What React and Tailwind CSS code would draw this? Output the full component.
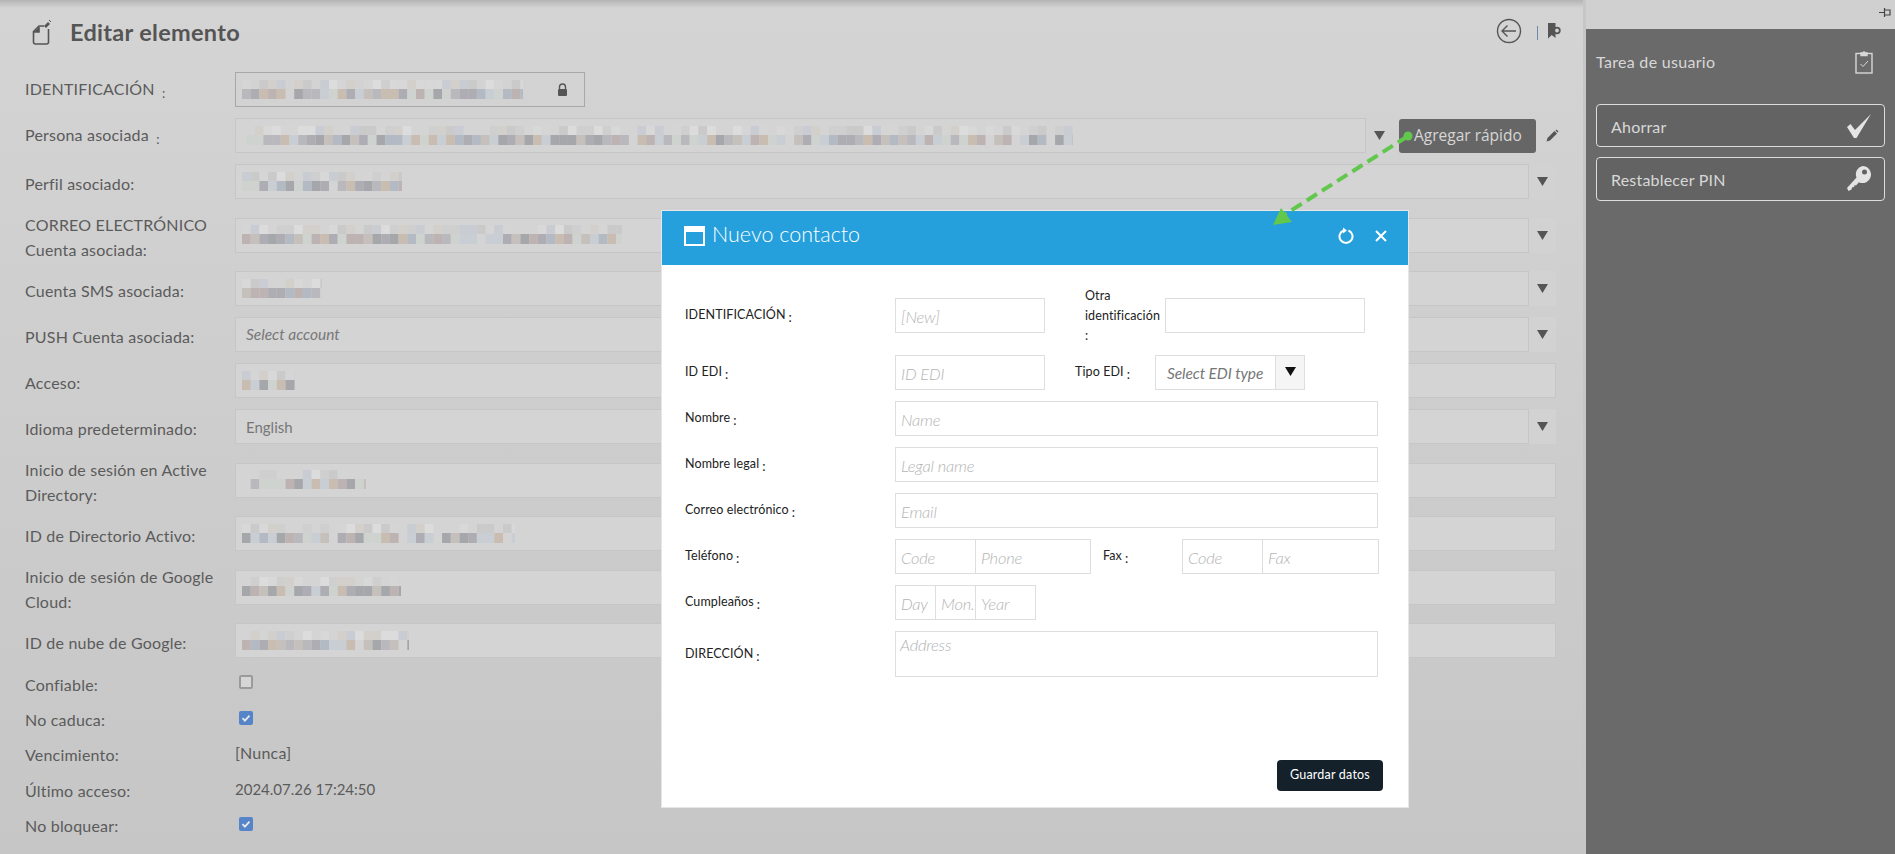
import React from 'react'

const topColors = ['#d8d8d8', '#cfcfcf', '#cacaca', '#d3cfcb', '#c9ccd2', '#dcdcdc', '#d5d5d5']
const lowColors = ['#b8b8bd', '#c5c0bb', '#adadb3', '#c8ced3', '#bdb3b3', '#a5a7ab', '#cfd3d0', '#c8bdb0', '#b3bac4']

// pixelated (redacted) text
function Pixels({ width, seed, height = 20 }) {
  const step = 8.7
  const count = Math.ceil(width / step)
  const rects = []
  let s = seed
  const next = () => {
    s = (s * 9301 + 49297) % 233280
    return s / 233280
  }
  for (let i = 0; i < count; i++) {
    const a = next()
    const b = next()
    if (a > 0.25) rects.push(<rect key={`t${i}`} x={i * step} y={0} width={step} height={9} fill={topColors[Math.floor(b * topColors.length)]} />)
    const c = next()
    const d = next()
    if (c > 0.06) rects.push(<rect key={`l${i}`} x={i * step} y={9} width={step} height={10} fill={lowColors[Math.floor(d * lowColors.length)]} />)
  }
  return (
    <svg width={width} height={height} className="block shrink-0">
      {rects}
    </svg>
  )
}

function Caret({ dark }) {
  return (
    <svg width="11" height="9" viewBox="0 0 11 9" className="block">
      <path d="M0 0h11L5.5 9z" fill={dark ? '#111' : '#555'} />
    </svg>
  )
}

function Colon() {
  return <span className="ml-[3px] align-[-3px] text-[13px]">:</span>
}

function Field({ children, dropdown, className = 'flex-1' }) {
  return (
    <div className={`flex ${className}`}>
      <div className="flex h-[35px] flex-1 items-center border border-[#c6c6c6] bg-[#d4d4d4] pl-[6px] text-[#777]">
        {children}
      </div>
      {dropdown && (
        <div className="flex h-[35px] w-[27px] items-center justify-center bg-[#d2d2d2]">
          <Caret />
        </div>
      )}
    </div>
  )
}

function Row({ label, tall, children }) {
  return (
    <div className={`flex items-center ${tall ? 'h-[61px]' : 'h-[46px]'}`}>
      <div className="w-[235px] shrink-0 pl-[25px] pr-[5px] pt-[3px] leading-[25px]">{label}</div>
      {children}
    </div>
  )
}

function CheckRow({ label, checked }) {
  return (
    <div className="flex h-[35.25px] items-center">
      <div className="w-[239px] pl-[25px]">{label}</div>
      {checked ? (
        <div className="-mt-[4px] flex size-[14px] items-center justify-center rounded-[2px] bg-[#5584c9]">
          <svg width="10" height="10" viewBox="0 0 10 10" fill="none" stroke="#e8e8e8" strokeWidth="1.8">
            <path d="M1.5 5.2l2.4 2.4 4.6-5" />
          </svg>
        </div>
      ) : (
        <div className="-mt-[6px] size-[14px] rounded-[2px] border-2 border-[#9b9b9b] bg-[#d6d6d6]" />
      )}
    </div>
  )
}

function Box({ text, className = '' }) {
  return (
    <div className={`flex h-[35px] shrink-0 items-center overflow-hidden whitespace-nowrap border border-[#dedede] bg-white pl-[5px] pt-[3px] text-[16.5px] font-light italic tracking-[-0.2px] text-[#b4b4b4] ${className}`}>
      {text}
    </div>
  )
}

function ModalRow({ label, children, className = 'mt-[11px]' }) {
  return (
    <div className={`flex h-[35px] items-center ${className}`}>
      <div className="w-[210px] shrink-0 pt-[3px] text-[12.5px] tracking-[0.1px] text-[#222]">
        {label}
        <Colon />
      </div>
      {children}
    </div>
  )
}

export default function App() {
  return (
    <div className="relative flex h-screen w-full overflow-hidden font-['Lato',sans-serif] text-[16px] tracking-[0.2px] text-[#5b5b5b]">
      <div className="flex h-full w-[1586px] shrink-0 flex-col border-r-[3px] border-[#c6c6c6] bg-[linear-gradient(#d4d4d4,#c6c6c6)]">
        <div className="h-[8px] bg-[linear-gradient(#b4b4b4,#d3d3d300)]" />
        <div className="flex h-[58.5px] shrink-0 items-start pt-[10px]">
          <svg width="20" height="26" viewBox="0 0 20 26" fill="none" stroke="#555" strokeWidth="1.6" className="ml-[32px] mt-[1px]">
            <path d="M12 7H7L1.5 12.500V23a2 2 0 0 0 2 2h11a2 2 0 0 0 2-2V10" />
            <path d="M7 8v5H2" fill="#555" />
            <path d="M12 7l4-4 2 2-4 4z" fill="#555" stroke="none" />
            <path d="M17 1l2 2" strokeWidth="1" />
          </svg>
          <h1 className="ml-[18px] text-[23.5px] font-bold leading-[28px] tracking-[0.3px] text-[#555]">Editar elemento</h1>
          <div className="ml-auto flex items-center pr-[22px]">
            <svg width="26" height="26" viewBox="0 0 26 26" fill="none" stroke="#555" strokeWidth="1.4">
              <circle cx="13" cy="13" r="11.5" />
              <path d="M20 13H6M11.5 7.5L6 13l5.5 5.5" />
            </svg>
            <div className="ml-[15.5px] mt-[4px] h-[14px] w-px bg-[#6d8ba8]" />
            <svg width="14" height="18" viewBox="0 0 14 18" className="ml-[9px]">
              <path d="M1 1h7.500v15L4.750 13 1 16.500z" fill="#555" />
              <circle cx="10" cy="8.500" r="2.800" fill="#d2d2d2" stroke="#555" strokeWidth="1.800" />
            </svg>
          </div>
        </div>

        <Row label={<>IDENTIFICACIÓN <Colon /></>}>
          <div className="flex h-[35px] w-[350px] items-center border border-[#a8a8a8] pl-[6px]">
            <Pixels width={281} seed={11} />
            <svg width="11" height="13" viewBox="0 0 11 13" className="ml-[34px]">
              <path d="M2.500 6V4a3 3 0 0 1 6 0v2" fill="none" stroke="#555" strokeWidth="1.4" />
              <rect x="1" y="6" width="9" height="7" rx="1" fill="#555" />
            </svg>
          </div>
        </Row>
        <Row label={<>Persona asociada <Colon /></>}>
          <Field dropdown className="w-[1158px] shrink-0">
            <div className="pl-[4px]"><Pixels width={827} seed={23} /></div>
          </Field>
          <button className="ml-[6px] mr-[10px] flex h-[34px] w-[137px] shrink-0 items-center rounded-[3px] bg-[#666] pl-[15px] font-['Open_Sans',sans-serif] text-[15.5px] tracking-normal text-[#d6d6d6]">
            Agregar rápido
          </button>
          <svg width="13" height="13" viewBox="0 0 13 13">
            <path d="M0.500 12.500l1-3.500 7-7 2.500 2.500-7 7z" fill="#555" />
            <path d="M10 1l2 2" stroke="#555" strokeWidth="1.4" />
          </svg>
        </Row>
        <Row label="Perfil asociado:">
          <div className="mr-[27px] flex-1"><Field dropdown><Pixels width={160} seed={37} /></Field></div>
        </Row>
        <Row tall label={<>CORREO ELECTRÓNICO<br />Cuenta asociada:</>}>
          <div className="mr-[27px] flex-1"><Field dropdown><Pixels width={380} seed={41} /></Field></div>
        </Row>
        <Row label="Cuenta SMS asociada:">
          <div className="mr-[27px] flex-1"><Field dropdown><Pixels width={80} seed={53} /></Field></div>
        </Row>
        <Row label="PUSH Cuenta asociada:">
          <div className="mr-[27px] flex-1">
            <Field dropdown><span className="pl-[4px] text-[15.5px] italic tracking-normal">Select account</span></Field>
          </div>
        </Row>
        <Row label="Acceso:">
          <div className="mr-[27px] flex-1"><Field><Pixels width={53} seed={61} /></Field></div>
        </Row>
        <Row label="Idioma predeterminado:">
          <div className="mr-[27px] flex-1">
            <Field dropdown><span className="pl-[4px] pt-[2px] text-[15px] tracking-normal">English</span></Field>
          </div>
        </Row>
        <Row tall label="Inicio de sesión en Active Directory:">
          <div className="mr-[27px] flex-1"><Field><Pixels width={124} seed={71} /></Field></div>
        </Row>
        <Row label="ID de Directorio Activo:">
          <div className="mr-[27px] flex-1"><Field><Pixels width={273} seed={83} /></Field></div>
        </Row>
        <Row tall label="Inicio de sesión de Google Cloud:">
          <div className="mr-[27px] flex-1"><Field><Pixels width={159} seed={97} /></Field></div>
        </Row>
        <Row label="ID de nube de Google:">
          <div className="mr-[27px] flex-1"><Field><Pixels width={167} seed={101} /></Field></div>
        </Row>

        <div className="mt-[3.750px]">
          <CheckRow label="Confiable:" />
          <CheckRow label="No caduca:" checked />
          <div className="flex h-[35.25px] items-center">
            <div className="w-[235px] pl-[25px]">Vencimiento:</div>
            <span className="-mt-[4px]">[Nunca]</span>
          </div>
          <div className="flex h-[35.25px] items-center">
            <div className="w-[235px] pl-[25px]">Último acceso:</div>
            <span className="-mt-[3px] text-[15px] tracking-normal">2024.07.26 17:24:50</span>
          </div>
          <CheckRow label="No bloquear:" checked />
        </div>
      </div>

      <div className="flex h-full flex-1 flex-col">
        <div className="flex h-[29px] shrink-0 items-center justify-end bg-[#d0d0d0] pb-[3px] pr-[4px]">
          <svg width="12" height="10" viewBox="0 0 12 10" fill="none" stroke="#444" strokeWidth="1.200">
            <path d="M0 4.500h5M5.500 0v9M5.500 2H11v5H5.500" />
          </svg>
        </div>
        <div className="flex-1 bg-[#6a6a6a] px-[10px] text-[#d8d8d8]">
          <div className="mt-[20px] flex h-[25px] items-center justify-between pr-[12px]">
            <span className="text-[16px] tracking-[0.3px]">Tarea de usuario</span>
            <svg width="18" height="24" viewBox="0 0 18 24" fill="none" stroke="#d8d8d8" strokeWidth="1.4">
              <rect x="1" y="3.500" width="16" height="19.500" />
              <path d="M6 5.500V3h2a1 1 0 0 1 2 0h2v2.500z" fill="#d8d8d8" />
              <path d="M5.500 14l2.500 2.500 5-5.500" strokeWidth="1" />
            </svg>
          </div>
          <button className="mt-[30px] flex h-[43px] w-full items-center justify-between rounded-[4px] border border-[#dcdcdc] bg-[#636363] pl-[14px] pr-[13px]">
            <span className="pt-[3px] text-[16px]">Ahorrar</span>
            <svg width="24" height="24" viewBox="0 0 24 24">
              <path d="M0 13l3.500-3 4.500 6L24 0 9.500 24H7z" fill="#e4e4e4" />
            </svg>
          </button>
          <button className="mt-[10px] flex h-[44px] w-full items-center justify-between rounded-[4px] border border-[#dcdcdc] bg-[#636363] pl-[14px] pr-[13px]">
            <span className="pt-[2px] text-[16px]">Restablecer PIN</span>
            <svg width="24" height="26" viewBox="0 0 24 26">
              <path fillRule="evenodd" d="M15.500 0a8.500 8.500 0 1 1-3.600 16.200L9 19.500l-1.500-.5-.3 2-2 .2-.7 2.300-3 1.500L0 22l9.500-10.500A8.500 8.500 0 0 1 15.500 0zm2 3.500a2.500 2.500 0 1 0 0 5 2.500 2.500 0 0 0 0-5z" fill="#e4e4e4" />
            </svg>
          </button>
        </div>
      </div>

      {/* modal */}
      <div className="absolute left-[661px] top-[210px] flex h-[598px] w-[748px] flex-col border border-[#e6e6e6] bg-white">
        <div className="flex h-[54px] shrink-0 items-center bg-[#25a0dc] pb-[4px] pl-[22px] pr-[21px] text-white">
          <div className="h-[20px] w-[21px] border-[2px] border-t-[6px] border-white" />
          <span className="mb-[2px] ml-[7px] text-[21.5px] font-light leading-none tracking-[0]">Nuevo contacto</span>
          <svg width="16" height="18" viewBox="0 0 16 18" fill="none" stroke="#fff" strokeWidth="2" className="ml-auto">
            <path d="M10.500 3.500a6.500 6.500 0 1 1-5 0" />
            <path d="M5 0.500l4 3-4 3z" fill="#fff" stroke="none" />
          </svg>
          <svg width="12" height="12" viewBox="0 0 12 12" fill="none" stroke="#fff" strokeWidth="2" className="ml-[21px]">
            <path d="M1 1l10 10M11 1L1 11" />
          </svg>
        </div>

        <div className="flex-1 pl-[23px] pt-[33px]">
          <ModalRow label="IDENTIFICACIÓN" className="">
            <Box text="[New]" className="w-[150px]" />
            <div className="ml-[40px] w-[80px] shrink-0 text-[12.5px] leading-[20px] tracking-[0.1px] text-[#222]">
              Otra<br />identificación<br />:
            </div>
            <Box text="" className="w-[200px]" />
          </ModalRow>
          <ModalRow label="ID EDI" className="mt-[22px]">
            <Box text="ID EDI" className="w-[150px]" />
            <div className="ml-[30px] w-[80px] shrink-0 pt-[3px] text-[12.5px] tracking-[0.1px] text-[#222]">Tipo EDI<Colon /></div>
            <div className="flex h-[35px] w-[150px] border border-[#dedede]">
              <div className="flex flex-1 items-center pl-[11px] pt-[3px] text-[15.5px] italic tracking-[-0.1px] text-[#777]">Select EDI type</div>
              <div className="flex w-[29px] items-center justify-center border-l border-[#dedede] bg-[#f5f5f5] pb-[2px]"><Caret dark /></div>
            </div>
          </ModalRow>
          <ModalRow label="Nombre"><Box text="Name" className="w-[483px]" /></ModalRow>
          <ModalRow label="Nombre legal"><Box text="Legal name" className="w-[483px]" /></ModalRow>
          <ModalRow label="Correo electrónico"><Box text="Email" className="w-[483px]" /></ModalRow>
          <ModalRow label="Teléfono">
            <Box text="Code" className="w-[81px]" />
            <Box text="Phone" className="-ml-px w-[116px]" />
            <div className="ml-[12px] w-[79px] shrink-0 pt-[3px] text-[12.5px] tracking-[0.1px] text-[#222]">Fax<Colon /></div>
            <Box text="Code" className="w-[81px]" />
            <Box text="Fax" className="-ml-px w-[117px]" />
          </ModalRow>
          <ModalRow label="Cumpleaños">
            <Box text="Day" className="w-[41px]" />
            <Box text="Mon." className="-ml-px w-[41px]" />
            <Box text="Year" className="-ml-px w-[61px]" />
          </ModalRow>
          <ModalRow label="DIRECCIÓN" className="mt-[11px] h-[46px]">
            <div className="h-[46px] w-[483px] border border-[#dedede] pl-[4px] pt-[1px] text-[16.5px] font-light italic tracking-[-0.2px] text-[#b4b4b4]">Address</div>
          </ModalRow>
          <div className="mr-[25px] mt-[83px] flex justify-end">
            <button className="h-[31px] w-[106px] rounded-[4px] bg-[#14212b] text-[12.5px] text-white">Guardar datos</button>
          </div>
        </div>
      </div>

      {/* green pointer from the button to the dialog */}
      <svg width="160" height="110" viewBox="0 0 160 110" className="absolute left-[1260px] top-[125px]">
        <circle cx="148" cy="11" r="4.500" fill="#62c74d" />
        <path d="M148 11L24 90" stroke="#62c74d" strokeWidth="4" strokeDasharray="12 6" />
        <path d="M13 100l8-17 11 14z" fill="#62c74d" />
      </svg>
    </div>
  )
}
